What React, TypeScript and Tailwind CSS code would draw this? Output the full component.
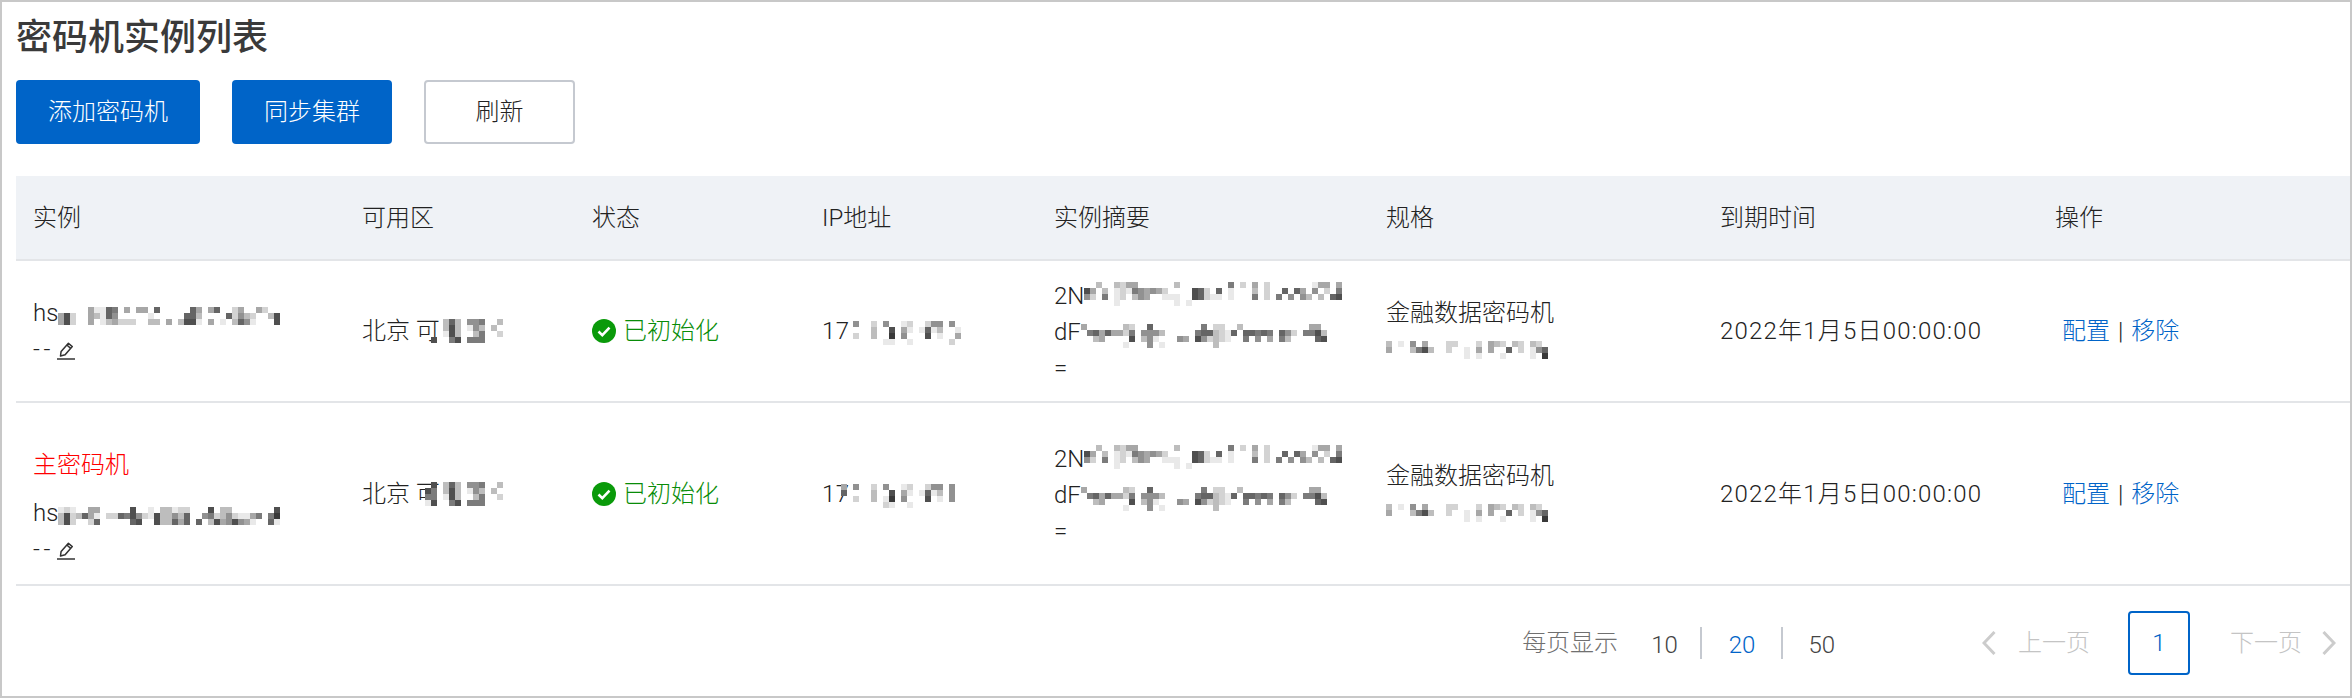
import React from 'react';

// 打码区域: each char is one 6px cell, '.' is white, 1-9 goes from light to dark grey
const Mosaic: React.FC<{ rows: string[]; className?: string }> = ({ rows, className }) => (
  <svg
    width={rows[0].length * 6}
    height={rows.length * 6}
    shapeRendering="crispEdges"
    className={`inline ${className ?? ''}`}
  >
    {rows.map((row, y) =>
      row.split('').map((c, x) =>
        c === '.' ? null : (
          <rect key={`${x}-${y}`} x={x * 6} y={y * 6} width={6} height={6} fill={`rgb(${255 - +c * 22},${255 - +c * 22},${255 - +c * 22})`} />
        ),
      ),
    )}
  </svg>
);

const hsA = [
  '.....41176.4.44.7.....74.47..24..42..',
  '482..43175.....1.....773....72532..38',
  '482..4.134222..33.4.3881.4.1.3751...8',
];
const hsB = [
  '121..44.....8..1.33122...8.33.......8',
  '3823741.22768521833537..5623521146.69',
  '382..27.....78..833747.7.38458541..71',
];
const zoneA = [
  '...373.556..3',
  '...383.153.3.',
  '...183..36..2',
  '.8..68.666...',
];
const zoneB = [
  '.8.373.556..3',
  '86.383.153.3.',
  '66.183..36..2',
  '18..68.666...',
];
const ipA = [
  '.5..2.5..12..255.5.',
  '....3..8.41.1713..1',
  '.2..3..9.5...8.1..4',
  '......11..1......2.',
];
const ipB = [
  '4.5..2.5..12..255.5.',
  '7....3..8.41.1713.5.',
  '..2..3.19.5...8.1.5.',
  '.......21..1........',
];
const digest1 = [
  '..3..3244......3........6.2.4.2.......144.4',
  '84.3.121654542....872.7.1...3.2..7.74.5.2.6',
  '52.6.12.354..111..87211.1...6.2.6.5.53.3.78',
  '.....1.........1.1.........................',
];
const digest2 = [
  '4......32..7........6.22..3...........44.',
  '.67474426.5553.....6773217.77676.752.6683',
  '..34....8.351...54.852321..6.5.4.63....78',
  '.......1...5.1........3...................',
];
const spec = [
  '3.1.5.4...22...2.432.32.32.',
  '4...3683..2..1.4.4..7.2.157',
  '.............1.1...1....1.9',
];

const columns = ['实例', '可用区', '状态', 'IP地址', '实例摘要', '规格', '到期时间', '操作'];

const rows = [
  { primary: false, hs: hsA, zone: zoneA, ip: ipA, ipMl: '-ml-[3px]' },
  { primary: true, hs: hsB, zone: zoneB, ip: ipB, ipMl: '-ml-[9px]' },
];

const PencilLine = () => (
  <svg width="20" height="20" viewBox="0 0 20 20" fill="none" stroke="#333" strokeWidth="1.5" className="inline align-[-3px] ml-[2px]">
    <path d="M4.5 16l.6-4.6L12.4 3.2l3.9 3.4-7.2 8.2z" strokeLinejoin="round" />
    <path d="M10.8 5l3.9 3.4" />
    <path d="M1 19h18" />
  </svg>
);

const CheckCircle = () => (
  <svg width="24" height="24" viewBox="0 0 24 24" className="inline shrink-0">
    <circle cx="12" cy="12" r="12" fill="#0a9a0a" />
    <path d="M6.5 12.5l3.8 3.6 7.2-7.4" fill="none" stroke="#fff" strokeWidth="2.6" />
  </svg>
);

const PageArrow: React.FC<{ dir: 'left' | 'right'; className?: string }> = ({ dir, className }) => (
  <svg width="14" height="24" viewBox="0 0 14 24" fill="none" stroke="#ccc" strokeWidth="3" className={className}>
    <path d={dir === 'left' ? 'M12.5 1L2 12l10.5 11' : 'M1.5 1L12 12 1.5 23'} />
  </svg>
);

export default function App() {
  return (
    <div className="h-[698px] w-[2352px] overflow-hidden border-2 border-[#c8c8c8] bg-white pl-[14px] text-[24px] font-light text-[#222] font-['Roboto','Noto_Sans_CJK_SC',sans-serif]">
      <h1 className="mt-[11px] mb-[17px] h-[50px] text-[36px] leading-[50px] font-medium text-[#3a3a3a]">密码机实例列表</h1>

      <div className="flex gap-8 mb-8">
        <button className="h-16 w-[184px] rounded bg-[#0064c8] text-white">添加密码机</button>
        <button className="h-16 w-[160px] rounded bg-[#0064c8] text-white">同步集群</button>
        <button className="h-16 w-[151px] rounded border-2 border-[#c5c9d0] bg-white">刷新</button>
      </div>

      <table className="w-[2334px] table-fixed">
        <colgroup>
          <col className="w-[329px]" />
          <col className="w-[230px]" />
          <col className="w-[230px]" />
          <col className="w-[232px]" />
          <col className="w-[332px]" />
          <col className="w-[334px]" />
          <col className="w-[335px]" />
          <col className="w-[312px]" />
        </colgroup>
        <thead>
          <tr className="h-[84px] border-b-2 border-[#e3e5e8] bg-[#eff2f6]">
            {columns.map((c) => (
              <th key={c} className="px-[17px] text-left font-light">{c}</th>
            ))}
          </tr>
        </thead>
        <tbody>
          {rows.map((r, i) => (
            <tr key={i} className={`border-b-2 border-[#e3e5e8] ${r.primary ? 'h-[183px]' : 'h-[142px]'}`}>
              <td className={`px-[17px] leading-9 ${r.primary ? 'pt-[26px]' : ''}`}>
                {r.primary && <div className="mb-3 text-[#f00]">主密码机</div>}
                <div className="whitespace-nowrap">hs<Mosaic rows={r.hs} className="align-[-4px]" /></div>
                <div className="tracking-[3.5px]">--<PencilLine /></div>
              </td>
              <td className="px-[17px] whitespace-nowrap">北京 可<Mosaic rows={r.zone} className="-ml-[15px] align-[-4px]" /></td>
              <td className="px-[17px]">
                <div className="flex items-center gap-[7px] text-[#088c08]"><CheckCircle />已初始化</div>
              </td>
              <td className="px-[17px] whitespace-nowrap tracking-[0.5px]">17<Mosaic rows={r.ip} className={`${r.ipMl} align-[-6px]`} /></td>
              <td className="px-[17px] pt-[2px] leading-9 whitespace-nowrap">
                <div>2N<Mosaic rows={digest1} className="align-[-2px]" /></div>
                <div>dF<Mosaic rows={digest2} className="align-[-8px]" /></div>
                <div>=</div>
              </td>
              <td className="px-[17px] leading-9">
                <div>金融数据密码机</div>
                <div><Mosaic rows={spec} className="align-[-2px]" /></div>
              </td>
              <td className="px-[17px] whitespace-nowrap tracking-[1.2px]">2022年1月5日00:00:00</td>
              <td className="px-[17px] whitespace-nowrap">
                <span className="ml-[7px] text-[#0064c8]">配置</span>
                <span className="mx-2">|</span>
                <span className="text-[#0064c8]">移除</span>
              </td>
            </tr>
          ))}
        </tbody>
      </table>

      <div className="mt-[25px] flex h-16 items-center justify-end pr-[14px]">
        <span className="text-[#707070]">每页显示</span>
        <span className="mt-1 ml-[33px] text-[#444]">10</span>
        <span className="ml-[22px] h-8 w-0.5 bg-[#c5c9d0]" />
        <span className="mt-1 ml-[27px] text-[#0064c8]">20</span>
        <span className="ml-[26px] h-8 w-0.5 bg-[#c5c9d0]" />
        <span className="mt-1 ml-[25px] text-[#444]">50</span>
        <PageArrow dir="left" className="ml-[147px]" />
        <span className="ml-[22px] text-[#c4c4c4]">上一页</span>
        <span className="ml-[38px] flex h-16 w-[62px] items-center justify-center rounded border-2 border-[#0064c8] text-[#0064c8]">1</span>
        <span className="ml-10 text-[#c4c4c4]">下一页</span>
        <PageArrow dir="right" className="ml-5" />
      </div>
    </div>
  );
}
